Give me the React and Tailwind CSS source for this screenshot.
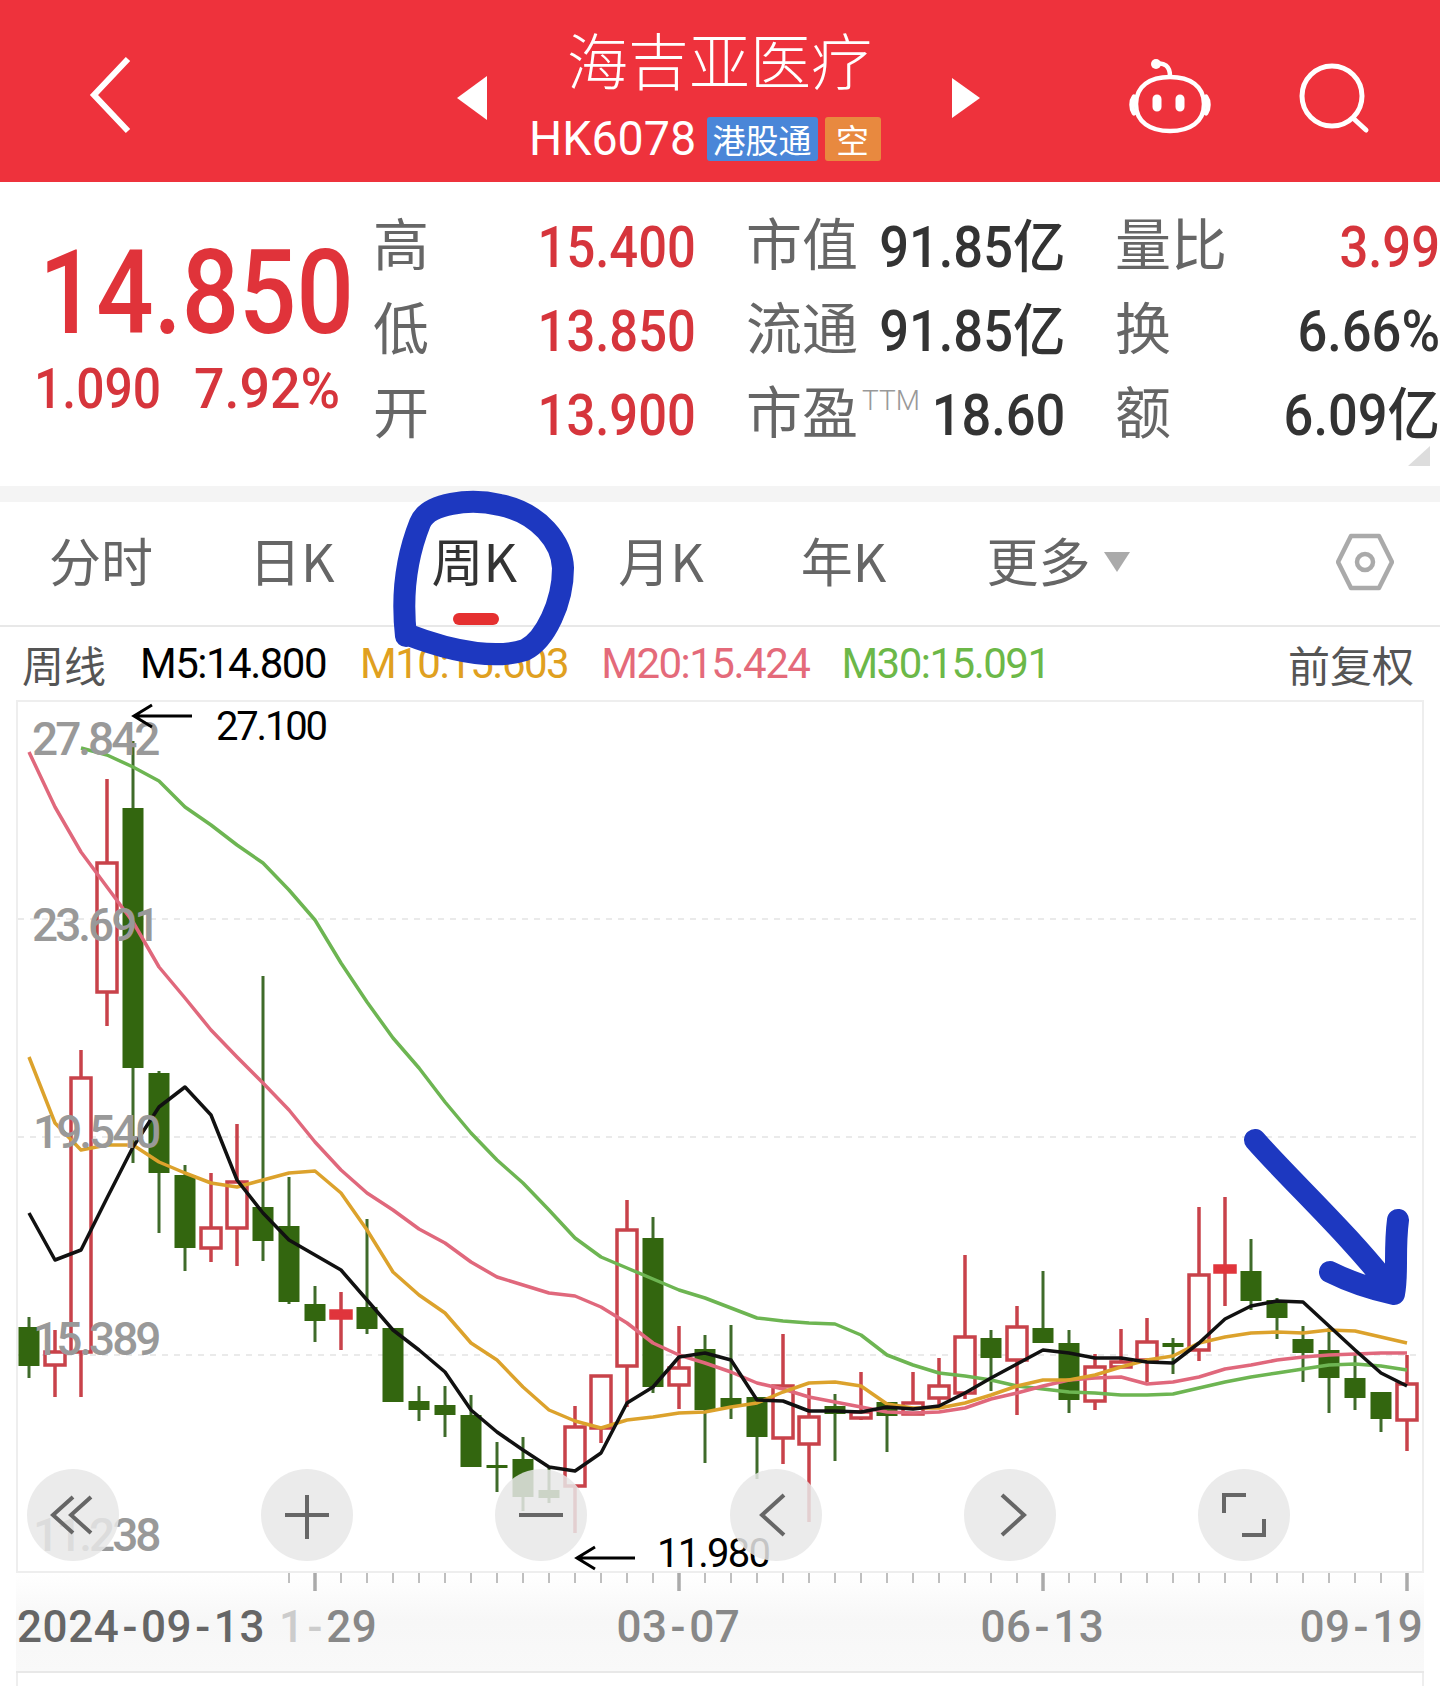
const GREEN = "#33660f";
const GREEN_WICK = "#3f6b2a";
const RED = "#c8424a";

// [high, bodyTop, bodyBottom, low, "g" | "r" | "f" (filled red)]
const candles = [
  [1317, 1327, 1366, 1378, "g"], [1330, 1352, 1365, 1397, "r"], [1050, 1078, 1352, 1397, "r"],
  [779, 863, 992, 1026, "r"], [741, 808, 1068, 1163, "g"], [1071, 1073, 1173, 1233, "g"],
  [1165, 1175, 1248, 1271, "g"], [1173, 1228, 1248, 1262, "r"], [1124, 1182, 1228, 1266, "r"],
  [976, 1207, 1241, 1261, "g"], [1177, 1226, 1302, 1304, "g"], [1286, 1304, 1321, 1342, "g"],
  [1292, 1311, 1318, 1350, "f"], [1219, 1307, 1329, 1334, "g"], [1328, 1328, 1402, 1402, "g"],
  [1386, 1401, 1410, 1421, "g"], [1386, 1405, 1415, 1437, "g"], [1395, 1415, 1467, 1467, "g"],
  [1442, 1465, 1468, 1492, "g"], [1437, 1459, 1497, 1511, "g"], [1468, 1490, 1498, 1503, "g"],
  [1406, 1427, 1486, 1533, "r"], [1376, 1376, 1428, 1443, "r"], [1200, 1230, 1366, 1407, "r"],
  [1217, 1238, 1387, 1393, "g"], [1326, 1368, 1385, 1409, "r"], [1335, 1349, 1410, 1463, "g"],
  [1325, 1398, 1407, 1419, "g"], [1397, 1397, 1437, 1479, "g"], [1334, 1386, 1438, 1464, "r"],
  [1388, 1417, 1444, 1522, "r"], [1394, 1406, 1414, 1461, "g"], [1372, 1412, 1418, 1420, "r"],
  [1402, 1402, 1416, 1452, "g"], [1372, 1403, 1414, 1414, "r"], [1358, 1386, 1398, 1407, "r"],
  [1255, 1337, 1393, 1399, "r"], [1330, 1338, 1358, 1391, "g"], [1306, 1327, 1360, 1415, "r"],
  [1271, 1328, 1343, 1343, "g"], [1330, 1343, 1400, 1413, "g"], [1354, 1367, 1401, 1410, "r"],
  [1329, 1362, 1367, 1367, "r"], [1318, 1342, 1360, 1382, "r"], [1338, 1343, 1347, 1374, "g"],
  [1207, 1275, 1350, 1361, "r"], [1197, 1266, 1272, 1306, "f"], [1239, 1271, 1301, 1310, "g"],
  [1298, 1300, 1318, 1339, "g"], [1326, 1339, 1353, 1382, "g"], [1328, 1350, 1378, 1413, "g"],
  [1354, 1378, 1398, 1410, "g"], [1392, 1392, 1419, 1432, "g"], [1355, 1384, 1420, 1451, "r"],
];

const m5 = [1213, 1260, 1250, 1198, 1147, 1107, 1087, 1115, 1180, 1213, 1240, 1255, 1270, 1300, 1330, 1350, 1372, 1410, 1432, 1450, 1467, 1471, 1453, 1403, 1387, 1357, 1353, 1360, 1400, 1401, 1411, 1411, 1412, 1407, 1409, 1406, 1393, 1378, 1364, 1350, 1353, 1358, 1358, 1362, 1363, 1343, 1319, 1306, 1301, 1302, 1326, 1350, 1373, 1386];
const m10 = [1057, 1123, 1150, 1145, 1145, 1162, 1173, 1183, 1187, 1180, 1173, 1171, 1193, 1230, 1272, 1295, 1313, 1343, 1360, 1387, 1410, 1421, 1428, 1420, 1417, 1413, 1412, 1407, 1403, 1392, 1383, 1382, 1386, 1404, 1408, 1408, 1403, 1395, 1386, 1380, 1380, 1375, 1367, 1360, 1356, 1343, 1337, 1333, 1332, 1333, 1330, 1331, 1337, 1343];
const m20 = [752, 807, 852, 887, 922, 967, 998, 1030, 1057, 1083, 1110, 1142, 1170, 1193, 1210, 1229, 1243, 1262, 1277, 1285, 1293, 1296, 1307, 1323, 1343, 1355, 1363, 1372, 1383, 1389, 1397, 1402, 1407, 1412, 1413, 1412, 1408, 1399, 1393, 1386, 1380, 1378, 1377, 1384, 1382, 1377, 1369, 1365, 1360, 1357, 1355, 1354, 1353, 1353];
const m30 = [748, 755, 767, 781, 807, 825, 845, 863, 890, 920, 963, 1002, 1038, 1068, 1102, 1133, 1160, 1183, 1210, 1238, 1257, 1268, 1279, 1290, 1298, 1308, 1318, 1321, 1323, 1324, 1335, 1355, 1365, 1373, 1376, 1380, 1386, 1389, 1392, 1393, 1395, 1395, 1394, 1388, 1382, 1377, 1373, 1369, 1365, 1364, 1366, 1370];

const xAt = (i) => 29 + 26 * i;
const points = (ys, start = 0) => ys.map((y, i) => `${xAt(i + start)},${y}`).join(" ");

function Candle({ c, i }) {
  const [high, top, bottom, low, kind] = c;
  const x = xAt(i);
  if (kind === "g") {
    return (
      <g>
        <line x1={x} x2={x} y1={high} y2={low} stroke={GREEN_WICK} strokeWidth="3" />
        <rect x={x - 10.5} y={top} width="21" height={bottom - top} fill={GREEN} />
      </g>
    );
  }
  return (
    <g>
      <line x1={x} x2={x} y1={high} y2={top} stroke={RED} strokeWidth="3.5" />
      <line x1={x} x2={x} y1={bottom} y2={low} stroke={RED} strokeWidth="3.5" />
      <rect
        x={x - 10}
        y={top}
        width="20"
        height={bottom - top}
        fill={kind === "f" ? "#e0353c" : "#fff"}
        stroke={kind === "f" ? "#e0353c" : RED}
        strokeWidth="3.5"
      />
    </g>
  );
}

function RoundButton({ children }) {
  return (
    <div className="w-[92px] h-[92px] rounded-full bg-[#e8e8e8]/85 flex items-center justify-center">
      <svg width="52" height="52" viewBox="0 0 52 52" fill="none" stroke="#666" strokeWidth="4">
        {children}
      </svg>
    </div>
  );
}

function StatLabel({ children }) {
  return <span className="shrink-0 whitespace-nowrap text-[56px] leading-none text-[#666] [font-family:'Noto_Sans_CJK_SC',sans-serif]">{children}</span>;
}

function StatValue({ children, red }) {
  return (
    <span className={`inline-block origin-right translate-y-[6px] whitespace-nowrap text-[57px] leading-none font-medium ${red ? "scale-x-[0.89] text-[#d6353c]" : "scale-x-[0.92] text-[#333]"}`}>
      {children}
    </span>
  );
}

function Tab({ children, active, className }) {
  return (
    <span className={`text-[52px] leading-none [font-family:'Noto_Sans_CJK_SC',sans-serif] ${active ? "text-[#333]" : "text-[#666]"} ${className}`}>
      {children}
    </span>
  );
}

function AxisLabel({ children }) {
  return <span className="absolute left-[14px] text-[46px] leading-none text-[#999] font-medium tracking-[-3px]">{children}</span>;
}

function Dash() {
  return <span className="mx-[3px]">-</span>;
}

export default function App() {
  return (
    <div className="relative w-[1440px] h-[1686px] overflow-hidden bg-white [font-family:'Roboto','Noto_Sans_CJK_SC',sans-serif]">
      {/* Header */}
      <div className="h-[182px] bg-[#ee323c] flex items-center">
        <svg className="ml-[84px] mt-[8px]" width="52" height="80" viewBox="0 0 52 80" fill="none" stroke="#fff" strokeWidth="6">
          <path d="M44 4 L10 40 L44 76" />
        </svg>
        <svg width="30" height="44" viewBox="0 0 30 44" fill="#fff" className="ml-[321px] mt-[14px]">
          <path d="M30 0 V44 L0 22 Z" />
        </svg>
        <div className="w-[465px] flex flex-col items-center">
          <div className="text-[61px] leading-[72px] mt-[-3px] text-white font-light [font-family:'Noto_Sans_CJK_SC',sans-serif]">海吉亚医疗</div>
          <div className="flex items-center mt-[20px] mb-[-7px] mr-[30px]">
            <span className="inline-block w-[164px] origin-left scale-x-[0.97] whitespace-nowrap text-[48px] leading-none text-white">HK6078</span>
            <span className="ml-[14px] w-[111px] h-[44px] bg-[#4a86d8] rounded-[3px] text-[33px] leading-[44px] text-center text-white [font-family:'Noto_Sans_CJK_SC',sans-serif]">港股通</span>
            <span className="ml-[7px] w-[56px] h-[44px] bg-[#e8893f] rounded-[3px] text-[33px] leading-[44px] text-center text-white [font-family:'Noto_Sans_CJK_SC',sans-serif]">空</span>
          </div>
        </div>
        <svg width="28" height="40" viewBox="0 0 28 40" fill="#fff" className="mt-[14px]">
          <path d="M0 0 V40 L28 20 Z" />
        </svg>
        <svg className="ml-[148px] mt-[12px]" width="84" height="78" viewBox="0 0 84 78" fill="none" stroke="#fff" strokeWidth="4.5">
          <path d="M28 6 C36 4 42 8 42 18" strokeLinecap="round" />
          <circle cx="28" cy="6" r="5" fill="#fff" stroke="none" />
          <path d="M8 46 C8 28 22 19 42 19 C62 19 76 28 76 46 C76 64 62 73 42 73 C22 73 8 64 8 46 Z" />
          <path d="M6 39 C3 43 3 50 6 55 M78 39 C81 43 81 50 78 55" strokeWidth="5" strokeLinecap="round" />
          <path d="M29 41 V49 M52 41 V49" strokeWidth="9" strokeLinecap="round" />
        </svg>
        <svg className="ml-[87px] mt-[14px]" width="72" height="72" viewBox="0 0 72 72" fill="none" stroke="#fff" strokeWidth="5">
          <circle cx="33" cy="34" r="30" />
          <path d="M55 57 L67 68" strokeLinecap="round" />
        </svg>
      </div>

      {/* Quote */}
      <div className="h-[304px] relative flex">
        <div className="w-[375px] flex flex-col">
          <div className="ml-[39px] mt-[53px] inline-block origin-left scale-x-[0.87] whitespace-nowrap text-[116px] leading-[116px] font-medium text-[#e0333a]">14.850</div>
          <div className="ml-[34px] mt-[10px] flex gap-[34px] text-[56px] leading-none font-medium text-[#d6353c]">
            <span className="inline-block w-[126px] origin-left scale-x-[0.89]">1.090</span>
            <span className="inline-block w-[146px] origin-left scale-x-[0.96]">7.92%</span>
          </div>
        </div>
        <div className="mt-[30px] ml-[-2px] grid grid-cols-[323px_319px_325px] gap-x-[50px] gap-y-[26px] h-fit">
          <div className="flex justify-between items-center h-[58px]"><StatLabel>高</StatLabel><StatValue red>15.400</StatValue></div>
          <div className="flex justify-between items-center h-[58px]"><StatLabel>市值</StatLabel><StatValue>91.85亿</StatValue></div>
          <div className="flex justify-between items-center h-[58px]"><StatLabel>量比</StatLabel><StatValue red>3.99</StatValue></div>
          <div className="flex justify-between items-center h-[58px]"><StatLabel>低</StatLabel><StatValue red>13.850</StatValue></div>
          <div className="flex justify-between items-center h-[58px]"><StatLabel>流通</StatLabel><StatValue>91.85亿</StatValue></div>
          <div className="flex justify-between items-center h-[58px]"><StatLabel>换</StatLabel><StatValue>6.66%</StatValue></div>
          <div className="flex justify-between items-center h-[58px]"><StatLabel>开</StatLabel><StatValue red>13.900</StatValue></div>
          <div className="flex justify-between items-center h-[58px]">
            <span className="flex items-start shrink-0">
              <StatLabel>市盈</StatLabel>
              <span className="text-[28px] leading-none font-light text-[#999] ml-[4px] mt-[6px]">TTM</span>
            </span>
            <StatValue>18.60</StatValue>
          </div>
          <div className="flex justify-between items-center h-[58px]"><StatLabel>额</StatLabel><StatValue>6.09亿</StatValue></div>
        </div>
        <svg className="absolute right-[10px] bottom-[20px]" width="22" height="20" viewBox="0 0 22 20" fill="#ddd">
          <path d="M22 0 V20 H0 Z" />
        </svg>
      </div>
      <div className="h-[16px] bg-[#f4f4f4]" />

      {/* Tabs */}
      <div className="relative h-[125px] border-b-2 border-[#e8e8e8] flex items-start pt-[32px]">
        <Tab className="ml-[49px]">分时</Tab>
        <Tab className="ml-[96px]">日K</Tab>
        <Tab active className="ml-[97px]">周K</Tab>
        <Tab className="ml-[101px]">月K</Tab>
        <Tab className="ml-[97px]">年K</Tab>
        <Tab className="ml-[100px]">更多</Tab>
        <svg className="ml-[14px] mt-[18px]" width="26" height="20" viewBox="0 0 26 20" fill="#aaa">
          <path d="M0 0 H26 L13 20 Z" />
        </svg>
        <svg className="ml-[206px] mt-[-1px]" width="58" height="58" viewBox="0 0 58 58" fill="none" stroke="#aaa" strokeWidth="4.5" strokeLinejoin="round">
          <path d="M15 3 H43 L56 29 L43 55 H15 L2 29 Z" />
          <circle cx="29" cy="29" r="8" />
        </svg>
        <div className="absolute left-[453px] top-[111px] w-[46px] h-[12px] rounded-full bg-[#e53030]" />
      </div>

      {/* MA legend */}
      <div className="h-[73px] flex items-center text-[42px] leading-none tracking-[-1.5px]">
        <span className="ml-[22px] text-[#555] tracking-normal [font-family:'Noto_Sans_CJK_SC',sans-serif]">周线</span>
        <span className="ml-[34px] text-black">M5:14.800</span>
        <span className="ml-[34px] text-[#e0a020]">M10:15.603</span>
        <span className="ml-[33px] text-[#e46a7a]">M20:15.424</span>
        <span className="ml-[32px] text-[#6cb848]">M30:15.091</span>
        <span className="ml-auto mr-[26px] text-[#555] tracking-normal [font-family:'Noto_Sans_CJK_SC',sans-serif]">前复权</span>
      </div>

      {/* Chart */}
      <div className="relative mx-[16px] h-[873px] border-2 border-[#eeeeee]">
        <svg className="block" width="1404" height="869" viewBox="18 702 1404 869" fill="none">
          {[919, 1137, 1355].map((y) => (
            <line key={y} x1="18" x2="1422" y1={y} y2={y} stroke="#e4e4e4" strokeWidth="1.5" strokeDasharray="6 6" />
          ))}
          {candles.map((c, i) => (
            <Candle key={i} c={c} i={i} />
          ))}
          <polyline points={points(m30, 2)} stroke="#6db552" strokeWidth="3.5" strokeLinejoin="round" />
          <polyline points={points(m20)} stroke="#e0687c" strokeWidth="3.5" strokeLinejoin="round" />
          <polyline points={points(m10)} stroke="#dca22c" strokeWidth="3.5" strokeLinejoin="round" />
          <polyline points={points(m5)} stroke="#111" strokeWidth="3.5" strokeLinejoin="round" />
          {/* hand drawn arrow */}
          <path d="M1255 1140 C1290 1180 1350 1235 1392 1290 M1398 1220 C1394 1250 1398 1275 1394 1294 C1375 1290 1350 1282 1330 1272" stroke="#1d38c0" strokeWidth="22" strokeLinecap="round" strokeLinejoin="round" />
        </svg>

        <div className="absolute top-[14px] left-0 right-0"><AxisLabel>27.842</AxisLabel></div>
        <div className="absolute top-[200px] left-0 right-0"><AxisLabel>23.691</AxisLabel></div>
        <div className="absolute top-[407px] left-[1px] right-0"><AxisLabel>19.540</AxisLabel></div>
        <div className="absolute top-[614px] left-[1px] right-0"><AxisLabel>15.389</AxisLabel></div>
        <div className="absolute top-[810px] left-[1px] right-0"><AxisLabel>11.238</AxisLabel></div>

        {/* hand written annotations */}
        <div className="absolute left-[198px] top-[5px] text-[40px] leading-none text-black tracking-[-2.2px]">27.100</div>
        <div className="absolute left-[639px] top-[832px] text-[40px] leading-none text-black tracking-[-1.8px]">11.980</div>
        <svg className="absolute left-[112px] top-[0px]" width="64" height="28" viewBox="0 0 64 28" fill="none" stroke="#000" strokeWidth="3">
          <path d="M62 14 H4 M22 3 L4 14 L22 25" />
        </svg>
        <svg className="absolute left-[555px] top-[842px]" width="64" height="28" viewBox="0 0 64 28" fill="none" stroke="#000" strokeWidth="3">
          <path d="M62 14 H4 M22 3 L4 14 L22 25" />
        </svg>

        <div className="absolute left-[9px] top-[767px] w-[1263px] flex justify-between">
          <RoundButton><path d="M26 8 L6 26 L26 44 M44 8 L24 26 L44 44" /></RoundButton>
          <RoundButton><path d="M26 6 V50 M4 26 H48" /></RoundButton>
          <RoundButton><path d="M4 26 H48" /></RoundButton>
          <RoundButton><path d="M34 6 L12 26 L34 46" /></RoundButton>
          <RoundButton><path d="M18 6 L40 26 L18 46" /></RoundButton>
          <RoundButton><path d="M28 6 H6 V24 M46 30 V46 H24" /></RoundButton>
        </div>
      </div>

      {/* Time axis */}
      <div className="relative mx-[16px] h-[100px] bg-gradient-to-b from-white via-[#f7f7f7] to-[#f9f9f9] border-b-2 border-[#e8e8e8]">
        <svg className="block absolute left-0 top-0" width="1408" height="22" viewBox="16 1575 1408 22" fill="none" stroke="#aaa">
          {candles.map((_, i) => {
            if (i < 10) return null;
            const major = (i - 11) % 14 === 0;
            return <line key={i} x1={xAt(i)} x2={xAt(i)} y1="1575" y2={major ? 1593 : 1585} strokeWidth={major ? 3.5 : 1.5} />;
          })}
        </svg>
        <div className="pt-[32px] flex text-[44px] leading-none font-medium tracking-[0.6px]">
          <span className="ml-[1px] text-[#666]">2024<Dash />09<Dash />13</span>
          <span className="ml-[14px] text-[#888]"><span className="text-[#ccc]">1<Dash /></span>29</span>
          <span className="ml-[239px] text-[#888]">03<Dash />07</span>
          <span className="ml-[240px] text-[#888]">06<Dash />13</span>
          <span className="ml-[195px] text-[#888]">09<Dash />19</span>
        </div>
      </div>
      <div className="mx-[16px] h-[13px] border-x-2 border-[#eeeeee]" />

      {/* hand drawn circle round the weekly tab */}
      <svg className="absolute left-0 top-0 pointer-events-none" width="1440" height="700" viewBox="0 0 1440 700" fill="none">
        <path d="M406 636 C400 583 412 543 420 523 C428 503 470 498 500 505 C540 513 562 543 563 568 C563 603 545 640 525 650 C500 658 460 655 406 634 Z" stroke="#1d38c0" strokeWidth="22" strokeLinejoin="round" />
      </svg>
    </div>
  );
}
